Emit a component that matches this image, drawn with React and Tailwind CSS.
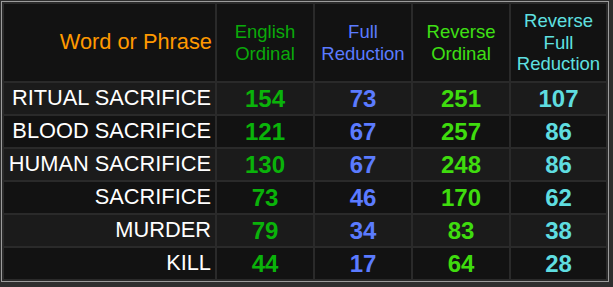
export default function App() {
  const rows = [
    ["RITUAL SACRIFICE", 154, 73, 251, 107],
    ["BLOOD SACRIFICE", 121, 67, 257, 86],
    ["HUMAN SACRIFICE", 130, 67, 248, 86],
    ["SACRIFICE", 73, 46, 170, 62],
    ["MURDER", 79, 34, 83, 38],
    ["KILL", 44, 17, 64, 28],
  ];
  const head = "flex items-center justify-center text-center text-[18.5px] leading-[21.5px] bg-[#121212]";
  const num = "flex items-center justify-center font-bold text-[24px]";
  return (
    <div className="w-[613px] h-[287px] bg-[#2e2e2e] pl-[1px] pt-[1px] font-['Liberation_Sans',Arial,sans-serif]">
      <div className="w-[608px] border border-[#9c9c9c] bg-[#2a2a2a] p-[2px] grid grid-cols-[211px_96px_96px_96px_95px] grid-rows-[77px_repeat(6,31px)] gap-[2px]">
        <div className="flex items-center justify-end pr-[3px] bg-[#121212] text-[#ff9900] text-[21.8px]">Word or Phrase</div>
        <div className={head + " text-[#0aaa0a]"}>English<br />Ordinal</div>
        <div className={head + " text-[#5b7bff]"}>Full<br />Reduction</div>
        <div className={head + " text-[#3fe014]"}>Reverse<br />Ordinal</div>
        <div className={head + " text-[#5fe0e0]"}>Reverse<br />Full<br />Reduction</div>
        {rows.map((r, i) => {
          const bg = i % 2 === 0 ? "bg-[#1b1b1b]" : "bg-[#121212]";
          return [
            <div key={i + "a"} className={"flex items-center justify-end pr-[4px] text-white text-[21.8px] " + bg}>{r[0]}</div>,
            <div key={i + "b"} className={num + " text-[#0ab30a] " + bg}>{r[1]}</div>,
            <div key={i + "c"} className={num + " text-[#5b7bff] " + bg}>{r[2]}</div>,
            <div key={i + "d"} className={num + " text-[#3fdc0e] " + bg}>{r[3]}</div>,
            <div key={i + "e"} className={num + " text-[#5fdde0] " + bg}>{r[4]}</div>,
          ];
        })}
      </div>
    </div>
  );
}
